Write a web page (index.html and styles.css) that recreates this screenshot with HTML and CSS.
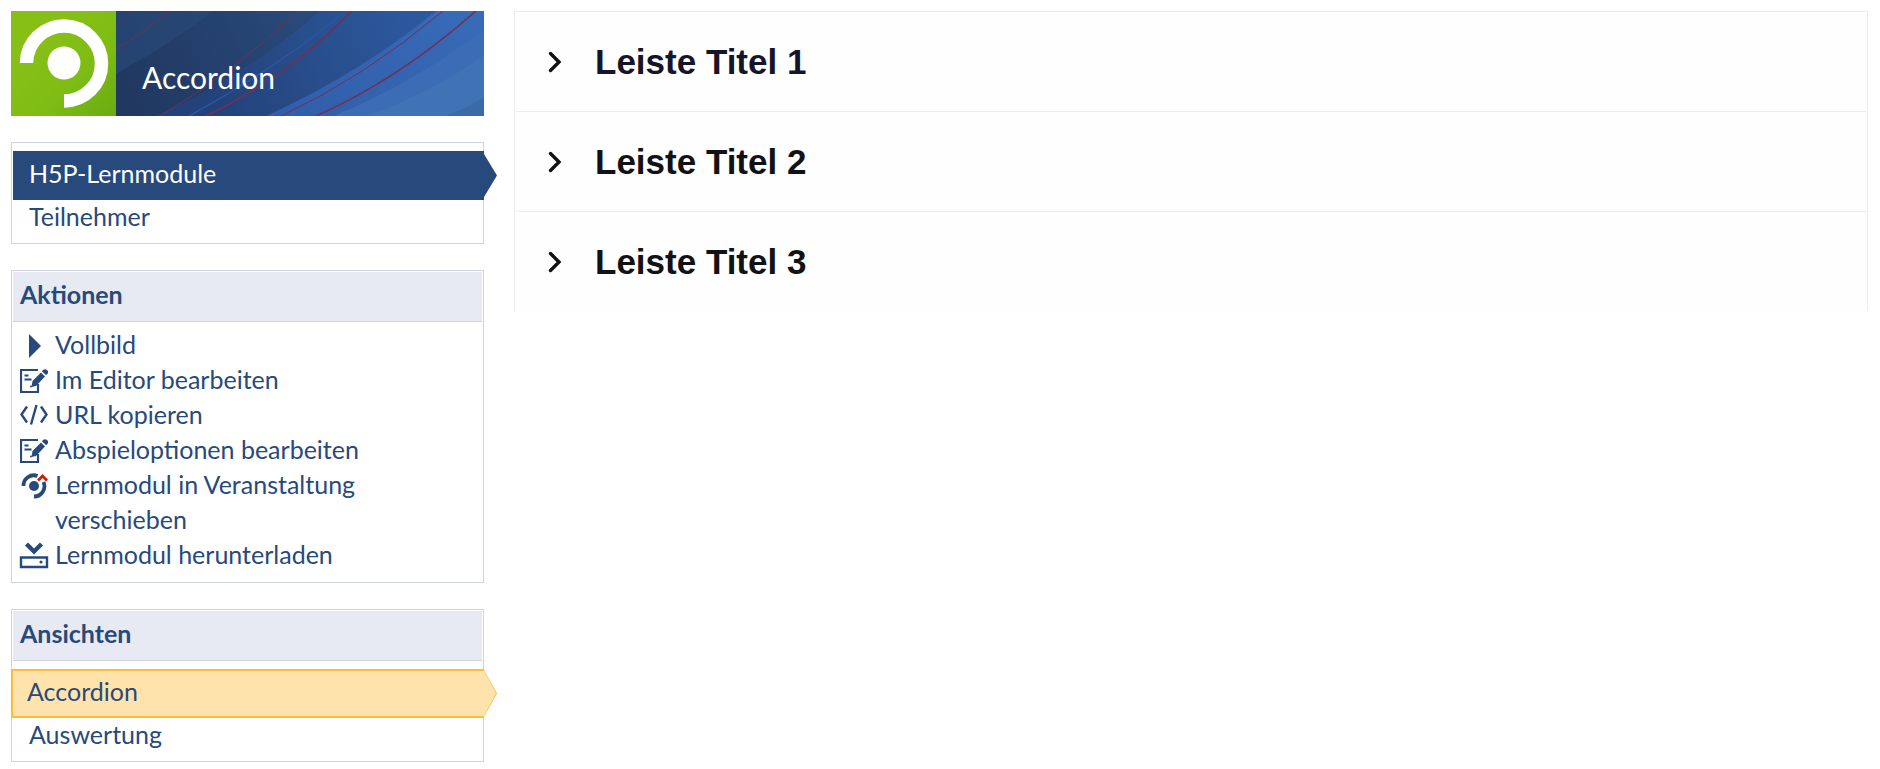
FILE: index.html
```html
<!DOCTYPE html>
<html lang="de">
<head>
    <meta charset="UTF-8">
    <meta name="viewport" content="width=device-width, initial-scale=1.0">
    <title>Accordion</title>
    <link rel="stylesheet" href="styles.css">
</head>
<body>
    <!-- icons used more than once -->
    <svg class="icon-defs" aria-hidden="true">
        <symbol id="icon-edit" viewBox="0 0 28 24">
            <path d="M18 15v8H1V1h17" fill="none" stroke="currentColor" stroke-width="2.200"/>
            <path d="M4.500 6.500h4M4.500 10.500h7" stroke="currentColor" stroke-width="1.800"/>
            <path d="M12.500 12l8.500-8.500 4 4-9 9.500-4.500 1z"/>
            <path d="M22 2.500c1-2 3-3 5-1.500s1 4-1 5z"/>
            <circle cx="11" cy="17.500" r="1"/>
        </symbol>
        <symbol id="icon-chevron" viewBox="0 0 14 22">
            <path d="M2.500 2.500l8.500 8.500-8.500 8.500" fill="none" stroke="currentColor" stroke-width="3.400" stroke-linecap="round"/>
        </symbol>
    </svg>

    <div class="layout">
        <aside class="sidebar">
            <header class="banner">
                <svg class="banner-logo" viewBox="0 0 105 105" aria-hidden="true">
                    <defs>
                        <linearGradient id="green" x1="0" y1="0" x2="1" y2="1">
                            <stop offset="0.300" stop-color="#87bf17"/>
                            <stop offset="0.650" stop-color="#7dbc14"/>
                            <stop offset="1" stop-color="#69ab12"/>
                        </linearGradient>
                    </defs>
                    <rect width="105" height="105" fill="url(#green)"/>
                    <path d="M15.500 52A37.500 37.500 0 1 1 53 90" fill="none" stroke="#fff" stroke-width="13.500"/>
                    <circle cx="53" cy="52" r="16.500" fill="#fff"/>
                </svg>
                <div class="banner-title">
                    <svg class="banner-art" viewBox="0 0 368 105" preserveAspectRatio="none" aria-hidden="true">
                        <defs>
                            <linearGradient id="blue" gradientUnits="userSpaceOnUse" x1="20" y1="90" x2="200" y2="0">
                                <stop offset="0" stop-color="#213961"/>
                                <stop offset="0.400" stop-color="#243f6b"/>
                                <stop offset="1" stop-color="#294b7c"/>
                            </linearGradient>
                            <linearGradient id="royal" gradientUnits="userSpaceOnUse" x1="100" y1="90" x2="290" y2="0">
                                <stop offset="0" stop-color="#23427a"/>
                                <stop offset="0.500" stop-color="#284e8b"/>
                                <stop offset="1" stop-color="#2c589e"/>
                            </linearGradient>
                            <linearGradient id="sky" x1="0" y1="1" x2="1" y2="0">
                                <stop offset="0" stop-color="#315da9"/>
                                <stop offset="1" stop-color="#386bb8"/>
                            </linearGradient>
                        </defs>
                        <rect width="368" height="105" fill="url(#blue)"/>
                        <path d="M0 0h98Q55 32 0 63z" fill="#284774" opacity="0.800"/>
                        <path d="M40 105Q130 65 204 0h130L170 105z" fill="url(#royal)"/>
                        <path d="M150 105Q245 62 320 0h48v105z" fill="url(#sky)"/>
                        <path d="M218 105Q305 68 368 18v87z" fill="#3b6cb5"/>
                        <path d="M250 105Q315 82 368 44v61z" fill="#3f73b5"/>
                        <path d="M330 105Q350 97 368 87v18z" fill="#3c6aa8"/>
                        <path d="M73 105Q155 61 230 0" fill="none" stroke="#2d54a0" stroke-width="1.500"/>
                        <g fill="none" stroke="#733052">
                            <path d="M0 14L19 0" opacity="0.500"/>
                            <path d="M0 38Q26 23 53 0" opacity="0.800"/>
                            <path d="M44 105Q123 58 181 0" opacity="0.900"/>
                            <path d="M90 105Q172 66 236 0" stroke-width="1.600"/>
                            <path d="M165 105Q247 67 327 0"/>
                            <path d="M200 105Q282 69 360 0" stroke-width="1.600"/>
                        </g>
                    </svg>
                    <span>Accordion</span>
                </div>
            </header>

            <nav class="box">
                <ul class="nav-list">
                    <li class="active"><a href="#">H5P-Lernmodule</a></li>
                    <li><a href="#">Teilnehmer</a></li>
                </ul>
            </nav>

            <section class="box">
                <h2>Aktionen</h2>
                <ul class="action-list">
                    <li>
                        <svg viewBox="0 0 28 24" aria-hidden="true"><path d="M9 0l12 12L9 24z"/></svg>
                        <a href="#">Vollbild</a>
                    </li>
                    <li>
                        <svg aria-hidden="true"><use href="#icon-edit"/></svg>
                        <a href="#">Im Editor bearbeiten</a>
                    </li>
                    <li>
                        <svg viewBox="0 0 28 24" aria-hidden="true"><path d="M7 2.500L1.500 10.500 7 18.500M21 2.500l5.500 8L21 18.500M16.500 1l-5.500 19.500" fill="none" stroke="currentColor" stroke-width="2.400"/></svg>
                        <a href="#">URL kopieren</a>
                    </li>
                    <li>
                        <svg aria-hidden="true"><use href="#icon-edit"/></svg>
                        <a href="#">Abspieloptionen bearbeiten</a>
                    </li>
                    <li>
                        <svg viewBox="0 0 28 24" aria-hidden="true">
                            <path d="M3.500 12A10.300 10.300 0 0 1 17.500 2M23.500 8A10.300 10.300 0 0 1 14 22.500" fill="none" stroke="currentColor" stroke-width="3.800"/>
                            <circle cx="14" cy="12" r="5"/>
                            <path d="M18 6.500L22.500 2 27 6.500" fill="none" stroke="#d61a00" stroke-width="2.800"/>
                        </svg>
                        <a href="#">Lernmodul in Veranstaltung verschieben</a>
                    </li>
                    <li>
                        <svg viewBox="0 0 28 24" aria-hidden="true">
                            <path d="M6.500 0L14 7.500 21.500 0" fill="none" stroke="currentColor" stroke-width="4.400"/>
                            <path d="M1 13.500h26v9.500H1z" fill="none" stroke="currentColor" stroke-width="2.400"/>
                            <circle cx="21" cy="18" r="1.600"/>
                        </svg>
                        <a href="#">Lernmodul herunterladen</a>
                    </li>
                </ul>
            </section>

            <section class="box">
                <h2>Ansichten</h2>
                <ul class="nav-list">
                    <li class="current"><a href="#">Accordion</a></li>
                    <li><a href="#">Auswertung</a></li>
                </ul>
            </section>
        </aside>

        <main class="accordion">
            <h2><button type="button" class="first" aria-expanded="false"><svg aria-hidden="true"><use href="#icon-chevron"/></svg>Leiste Titel 1</button></h2>
            <h2><button type="button" aria-expanded="false"><svg aria-hidden="true"><use href="#icon-chevron"/></svg>Leiste Titel 2</button></h2>
            <h2><button type="button" aria-expanded="false"><svg aria-hidden="true"><use href="#icon-chevron"/></svg>Leiste Titel 3</button></h2>
        </main>
    </div>
</body>
</html>
```

FILE: styles.css
```css
* {
    box-sizing: border-box;
}

body {
    margin: 0;
    background-color: #fff;
    color: #28497c;
    font-family: Lato, sans-serif;
    font-size: 25px;
    line-height: 35px;
}

h2, ul {
    margin: 0;
    padding: 0;
}

ul {
    list-style: none;
}

a {
    color: inherit;
    text-decoration: none;
}

a:hover {
    color: #d60000;
}

.icon-defs {
    position: absolute;
    width: 0;
    height: 0;
}

.layout {
    display: flex;
    align-items: flex-start;
    gap: 30px;
    padding: 11px 12px 0 11px;
}

/* sidebar */
.sidebar {
    flex: 0 0 473px;
    display: flex;
    flex-direction: column;
    gap: 26px;
}

.banner {
    display: flex;
    height: 105px;
}

.banner-logo {
    width: 105px;
    height: 105px;
}

.banner-title {
    position: relative;
    flex: 1;
    display: flex;
    align-items: flex-end;
    padding: 0 26px 21px;
    color: #fff;
    font-size: 30px;
}

.banner-art {
    position: absolute;
    inset: 0;
    width: 100%;
    height: 100%;
}

.banner-title span {
    position: relative;
}

.box {
    border: 1px solid #d0d4e2;
}

.box h2 {
    margin: 1px 1px 0;
    padding: 5px 7px 9px;
    border-bottom: 1px solid #d0d4e2;
    background-color: #e7eaf2;
    font-size: 25px;
    font-weight: bold;
}

.nav-list {
    padding: 8px 0;
}

.nav-list a {
    display: block;
    padding: 0 17px 2px;
    line-height: 33px;
}

.nav-list .active,
.nav-list .current {
    position: relative;
    height: 49px;
}

.nav-list .active {
    margin: 0 -1px 0 1px;
    background-color: #28497c;
    color: #fff;
}

.nav-list .active a {
    padding: 6px 16px;
}

.nav-list .current {
    margin: 0 -1px;
    border: 2px solid #ffbd33;
    border-right: 0;
    background-color: #ffe3ad;
}

.nav-list .current a {
    padding: 4px 14px;
}

/* arrow at the right edge of the selected entry */
.active::after,
.current::before,
.current::after {
    content: "";
    position: absolute;
    left: 100%;
    top: 3px;
    bottom: 3px;
    width: 13px;
    background-color: #28497c;
    clip-path: polygon(0 0, 100% 50%, 0 100%);
}

.current::before {
    top: -1px;
    bottom: -1px;
    background-color: #ffbd33;
}

.current::after {
    top: 0;
    bottom: 0;
    width: 12px;
    background-color: #ffe3ad;
}

.action-list {
    padding: 5px 8px 10px;
}

.action-list li {
    display: flex;
    gap: 7px;
}

.action-list svg {
    flex: none;
    width: 28px;
    height: 24px;
    margin-top: 7px;
    fill: currentColor;
    overflow: visible;
}

/* accordion */
.accordion {
    flex: 1;
    border: 1px solid #ebebeb;
    border-bottom: 0;
    background-color: #fefefe;
}

.accordion h2 {
    padding: 0 1px;
}

.accordion h2 + h2 {
    margin: 0 1px;
    padding: 0;
    border-top: 1px solid #ebebeb;
}

.accordion button {
    display: flex;
    align-items: center;
    gap: 33px;
    width: 100%;
    height: 99px;
    padding: 0 32px;
    border: 0;
    background: none;
    color: #121215;
    font-family: "Liberation Sans", Arial, sans-serif;
    font-size: 35px;
    font-weight: bold;
    text-align: left;
    cursor: pointer;
}

.accordion .first {
    color: #14152b;
}

.accordion svg {
    width: 14px;
    height: 22px;
    color: #121215;
}
```
